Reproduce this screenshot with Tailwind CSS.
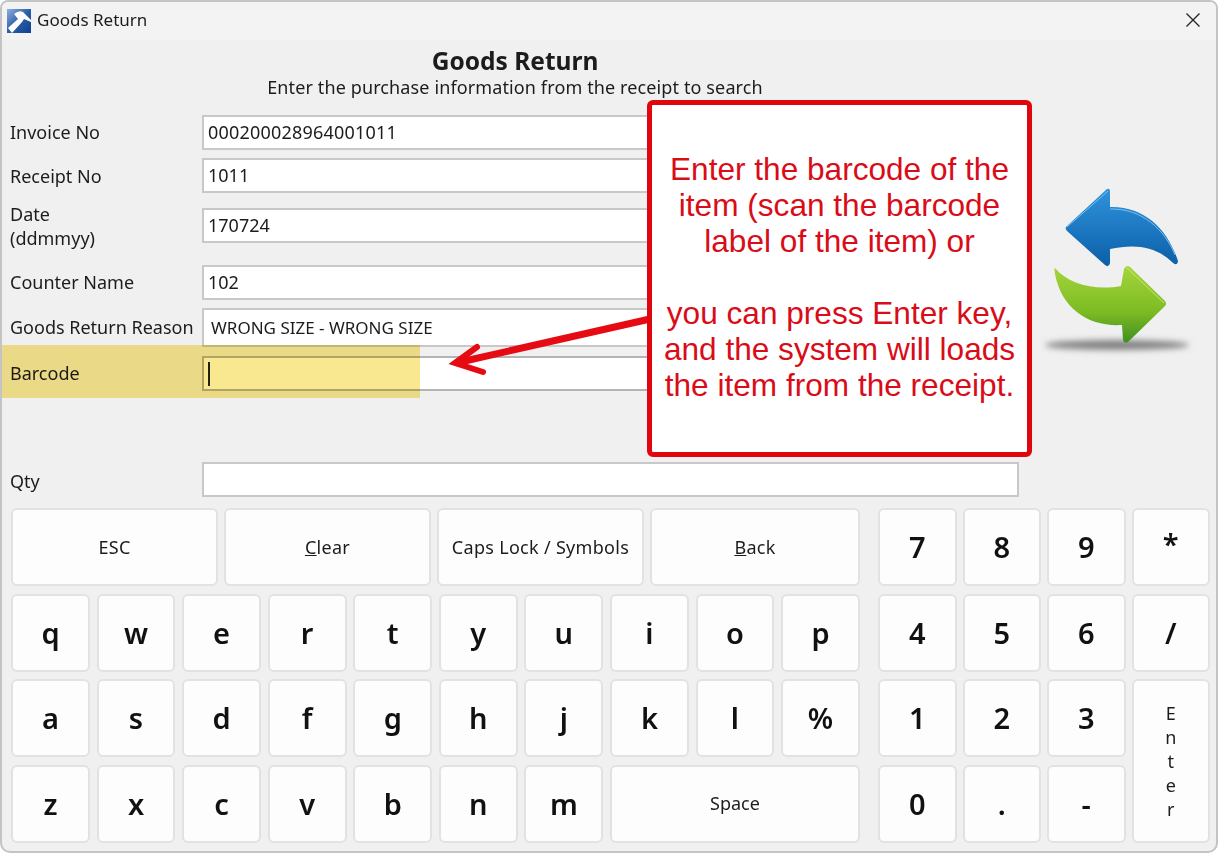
<!DOCTYPE html>
<html lang="en">
<head>
  <meta charset="UTF-8" />
  <title>Goods Return</title>
  <script src="https://cdn.jsdelivr.net/npm/@tailwindcss/browser@4"></script>
</head>
<body class="bg-white font-['Noto_Sans',sans-serif] text-[#1c1c1c]">
  <div class="relative w-[1218px] h-[853px] overflow-hidden bg-[#f0f0f0] border-2 border-[#c4c4c4] rounded-t-[8px] rounded-b-[10px]">
    <!-- title bar -->
    <header class="h-[38px] bg-[#f3f3f3] flex items-center pl-[5px] pr-[15px]">
      <svg class="w-[24px] h-[24px]" viewBox="0 0 24 24">
        <defs>
          <linearGradient id="logoBg" x1="0" y1="0" x2="1" y2="1">
            <stop offset="0" stop-color="#8fb0dc" />
            <stop offset="0.5" stop-color="#2c5fa8" />
            <stop offset="1" stop-color="#12408c" />
          </linearGradient>
        </defs>
        <rect width="24" height="24" fill="url(#logoBg)" />
        <path d="M1 19 L11 10 L7 5 Q12 1 16 3 L24 11 L24 13 L17 10 L15 13 L5 24 Z" fill="#fff" />
      </svg>
      <span class="ml-[6px] text-[17px] -mt-[2px]">Goods Return</span>
      <svg class="ml-auto w-[16px] h-[16px] -mt-[2px]" viewBox="0 0 16 16" fill="none" stroke="#222" stroke-width="1.3"><path d="M1.5 1.5 L14.5 14.5 M14.5 1.5 L1.5 14.5" /></svg>
    </header>

    <!-- heading -->
    <div class="w-[1026px] text-center pt-[7px]">
      <h1 class="text-[24.5px] leading-[28px] font-bold">Goods Return</h1>
      <p class="text-[18px] leading-[24px] tracking-[0.12px]">Enter the purchase information from the receipt to search</p>
    </div>

    <!-- form -->
    <form class="absolute left-[8px] top-[113px] w-[1010px] text-[18px]">
      <div class="flex items-center h-[35px]">
        <label class="w-[192px]">Invoice No</label>
        <div class="w-[817px] h-full bg-white border-2 border-[#c8c8c8] px-[4px] flex items-center tracking-[0.2px]">000200028964001011</div>
      </div>
      <div class="flex items-center h-[35px] mt-[8px]">
        <label class="w-[192px] pt-[1px]">Receipt No</label>
        <div class="w-[817px] h-full bg-white border-2 border-[#c8c8c8] px-[4px] flex items-center">1011</div>
      </div>
      <div class="flex items-center h-[35px] mt-[15px]">
        <label class="w-[192px] leading-[24px]">Date<br />(ddmmyy)</label>
        <div class="w-[817px] h-full bg-white border-2 border-[#c8c8c8] px-[4px] flex items-center">170724</div>
      </div>
      <div class="flex items-center h-[35px] mt-[22px]">
        <label class="w-[192px]">Counter Name</label>
        <div class="w-[817px] h-full bg-white border-2 border-[#c8c8c8] px-[4px] flex items-center">102</div>
      </div>
      <div class="flex items-center h-[39px] mt-[8px]">
        <label class="w-[192px] whitespace-nowrap">Goods Return Reason</label>
        <div class="w-[817px] h-full bg-white border-2 border-[#c8c8c8] px-[7px] flex items-center text-[17px]">WRONG SIZE - WRONG SIZE</div>
      </div>
      <div class="flex items-center h-[35px] mt-[9px]">
        <label class="w-[192px]">Barcode</label>
        <div class="w-[817px] h-full bg-white border-2 border-[#b4b4b4] px-[4px] flex items-center"><span class="w-[2px] h-[24px] bg-[#222]"></span></div>
      </div>
      <div class="flex items-center h-[35px] mt-[71px]">
        <label class="w-[192px] pt-[3px]">Qty</label>
        <div class="w-[817px] h-full bg-white border-2 border-[#c8c8c8]"></div>
      </div>
    </form>

    <!-- keyboard -->
    <div class="absolute left-[9px] top-[506px] flex gap-[18px]">
      <div class="w-[849px] flex flex-col gap-[7.5px]">
        <div class="grid grid-cols-[207px_207px_207px_210px] gap-[6px] h-[78px] text-[18px] tracking-[0.3px]">
          <button class="bg-[#fdfdfd] border-2 border-[#e2e2e2] rounded-[6px]">ESC</button>
          <button class="bg-[#fdfdfd] border-2 border-[#e2e2e2] rounded-[6px]"><u>C</u>lear</button>
          <button class="bg-[#fdfdfd] border-2 border-[#e2e2e2] rounded-[6px]">Caps Lock / Symbols</button>
          <button class="bg-[#fdfdfd] border-2 border-[#e2e2e2] rounded-[6px]"><u>B</u>ack</button>
        </div>
        <div class="grid grid-cols-10 gap-x-[6.67px] gap-y-[7.5px] auto-rows-[78px] text-[29px] font-semibold text-[#111]">
          <button class="bg-[#fdfdfd] border-2 border-[#e2e2e2] rounded-[6px]">q</button>
          <button class="bg-[#fdfdfd] border-2 border-[#e2e2e2] rounded-[6px]">w</button>
          <button class="bg-[#fdfdfd] border-2 border-[#e2e2e2] rounded-[6px]">e</button>
          <button class="bg-[#fdfdfd] border-2 border-[#e2e2e2] rounded-[6px]">r</button>
          <button class="bg-[#fdfdfd] border-2 border-[#e2e2e2] rounded-[6px]">t</button>
          <button class="bg-[#fdfdfd] border-2 border-[#e2e2e2] rounded-[6px]">y</button>
          <button class="bg-[#fdfdfd] border-2 border-[#e2e2e2] rounded-[6px]">u</button>
          <button class="bg-[#fdfdfd] border-2 border-[#e2e2e2] rounded-[6px]">i</button>
          <button class="bg-[#fdfdfd] border-2 border-[#e2e2e2] rounded-[6px]">o</button>
          <button class="bg-[#fdfdfd] border-2 border-[#e2e2e2] rounded-[6px]">p</button>
          <button class="bg-[#fdfdfd] border-2 border-[#e2e2e2] rounded-[6px]">a</button>
          <button class="bg-[#fdfdfd] border-2 border-[#e2e2e2] rounded-[6px]">s</button>
          <button class="bg-[#fdfdfd] border-2 border-[#e2e2e2] rounded-[6px]">d</button>
          <button class="bg-[#fdfdfd] border-2 border-[#e2e2e2] rounded-[6px]">f</button>
          <button class="bg-[#fdfdfd] border-2 border-[#e2e2e2] rounded-[6px]">g</button>
          <button class="bg-[#fdfdfd] border-2 border-[#e2e2e2] rounded-[6px]">h</button>
          <button class="bg-[#fdfdfd] border-2 border-[#e2e2e2] rounded-[6px]">j</button>
          <button class="bg-[#fdfdfd] border-2 border-[#e2e2e2] rounded-[6px]">k</button>
          <button class="bg-[#fdfdfd] border-2 border-[#e2e2e2] rounded-[6px]">l</button>
          <button class="bg-[#fdfdfd] border-2 border-[#e2e2e2] rounded-[6px]">%</button>
          <button class="bg-[#fdfdfd] border-2 border-[#e2e2e2] rounded-[6px]">z</button>
          <button class="bg-[#fdfdfd] border-2 border-[#e2e2e2] rounded-[6px]">x</button>
          <button class="bg-[#fdfdfd] border-2 border-[#e2e2e2] rounded-[6px]">c</button>
          <button class="bg-[#fdfdfd] border-2 border-[#e2e2e2] rounded-[6px]">v</button>
          <button class="bg-[#fdfdfd] border-2 border-[#e2e2e2] rounded-[6px]">b</button>
          <button class="bg-[#fdfdfd] border-2 border-[#e2e2e2] rounded-[6px]">n</button>
          <button class="bg-[#fdfdfd] border-2 border-[#e2e2e2] rounded-[6px]">m</button>
          <button class="col-span-3 bg-[#fdfdfd] border-2 border-[#e2e2e2] rounded-[6px] text-[18px] font-normal text-[#1c1c1c]">Space</button>
        </div>
      </div>
      <div class="w-[332px] grid grid-cols-4 gap-x-[6px] gap-y-[7.5px] auto-rows-[78px] text-[29px] font-semibold text-[#111]">
        <button class="bg-[#fdfdfd] border-2 border-[#e2e2e2] rounded-[6px]">7</button>
        <button class="bg-[#fdfdfd] border-2 border-[#e2e2e2] rounded-[6px]">8</button>
        <button class="bg-[#fdfdfd] border-2 border-[#e2e2e2] rounded-[6px]">9</button>
        <button class="bg-[#fdfdfd] border-2 border-[#e2e2e2] rounded-[6px] pb-[6px]">*</button>
        <button class="bg-[#fdfdfd] border-2 border-[#e2e2e2] rounded-[6px]">4</button>
        <button class="bg-[#fdfdfd] border-2 border-[#e2e2e2] rounded-[6px]">5</button>
        <button class="bg-[#fdfdfd] border-2 border-[#e2e2e2] rounded-[6px]">6</button>
        <button class="bg-[#fdfdfd] border-2 border-[#e2e2e2] rounded-[6px]">/</button>
        <button class="bg-[#fdfdfd] border-2 border-[#e2e2e2] rounded-[6px]">1</button>
        <button class="bg-[#fdfdfd] border-2 border-[#e2e2e2] rounded-[6px]">2</button>
        <button class="bg-[#fdfdfd] border-2 border-[#e2e2e2] rounded-[6px]">3</button>
        <button class="row-span-2 bg-[#fdfdfd] border-2 border-[#e2e2e2] rounded-[6px] text-[18px] font-normal text-[#1c1c1c] leading-[24px] pt-[1px] flex flex-col items-center justify-center"><span>E</span><span>n</span><span>t</span><span>e</span><span>r</span></button>
        <button class="bg-[#fdfdfd] border-2 border-[#e2e2e2] rounded-[6px]">0</button>
        <button class="bg-[#fdfdfd] border-2 border-[#e2e2e2] rounded-[6px]">.</button>
        <button class="bg-[#fdfdfd] border-2 border-[#e2e2e2] rounded-[6px]">-</button>
      </div>
    </div>

    <!-- return icon -->
    <svg class="absolute left-[1018px] top-[168px] w-[198px] h-[200px]" viewBox="0 0 198 200">
      <defs>
        <linearGradient id="blueArrow" x1="0" y1="0" x2="0" y2="1">
          <stop offset="0" stop-color="#2f93dc" />
          <stop offset="1" stop-color="#0b5fa8" />
        </linearGradient>
        <linearGradient id="greenArrow" x1="0" y1="0" x2="0" y2="1">
          <stop offset="0" stop-color="#a4d63c" />
          <stop offset="0.6" stop-color="#7dbb22" />
          <stop offset="1" stop-color="#3f8f22" />
        </linearGradient>
        <filter id="shadowBlur" x="-20%" y="-100%" width="140%" height="300%"><feGaussianBlur stdDeviation="3" /></filter>
      </defs>
      <ellipse cx="97" cy="175" rx="72" ry="5" fill="#808080" filter="url(#shadowBlur)" />
      <path d="M46 57 L87 19 Q90 18 90 22 L90 37 C125 36 148 60 158 91 Q157 97 152 92 C135 76 115 74 90 79 L90 93 Q89 98 85 95 L47 61 Q45 59 46 57 Z" fill="url(#blueArrow)" />
      <path d="M47 57 L88 21 M90 39 C122 38 145 60 155 85" fill="none" stroke="#7cc0ee" stroke-width="1" />
      <path d="M35 98 C48 114 75 121 101 116 L104 99 Q106 94 110 97 L145 131 Q147 134 145 136 L108 172 Q104 174 103 170 L102 155 C70 157 42 140 35 104 Q34 98 35 98 Z" fill="url(#greenArrow)" />
      <path d="M106 97 L144 133" fill="none" stroke="#c6e77c" stroke-width="1" />
    </svg>

    <!-- yellow highlight -->
    <div class="absolute left-0 top-[343px] w-[418px] h-[53px] bg-[#f9e88f] mix-blend-multiply"></div>

    <!-- callout arrow -->
    <svg class="absolute left-[438px] top-[308px] w-[220px] h-[80px]" viewBox="0 0 220 80">
      <path d="M210 9 L16 53" stroke="#e60a12" stroke-width="7" fill="none" />
      <path d="M37 37 L15 53 L43 62" stroke="#e60a12" stroke-width="6" fill="none" stroke-linecap="round" />
    </svg>

    <!-- callout -->
    <div class="absolute left-[645px] top-[98px] w-[385px] h-[357px] pb-[4px] bg-white border-[5px] border-[#e0060e] rounded-[6px] flex flex-col items-center justify-center text-[#d90c18] text-[31.6px] leading-[36px] font-['Liberation_Sans',sans-serif] text-center whitespace-nowrap">
      <p>Enter the barcode of the<br />item (scan the barcode<br />label of the item) or</p>
      <p class="mt-[36px]">you can press Enter key,<br />and the system will loads<br />the item from the receipt.</p>
    </div>
  </div>
</body>
</html>
